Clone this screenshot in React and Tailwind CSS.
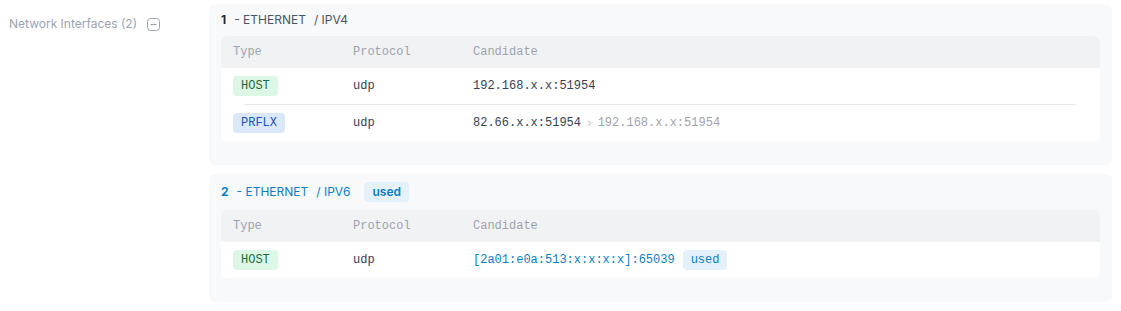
import React from 'react';

const mono = "font-['Liberation_Mono','DejaVu_Sans_Mono',monospace]";

const TypeBadge = ({ type }) => {
    const tone = type === 'HOST'
        ? 'bg-[#dcf7e6] text-[#1c6b3c]'
        : 'bg-[#dbe8fb] text-[#2050b8]';
    return (
        <span className={`flex items-center h-5 px-2 rounded text-[12px] leading-none ${mono} ${tone}`}>
            {type}
        </span>
    );
};

const UsedBadge = ({ monoFont }) => (
    <span
        className={`flex items-center h-5 px-2 rounded bg-[#e4f0fa] text-[#0b7ec3] text-[12px] leading-none ${monoFont ? mono : 'font-semibold'}`}
    >
        used
    </span>
);

const Row = ({ type, candidate }) => (
    <div className="grid grid-cols-[120px_120px_1fr] items-center h-9 pl-3 bg-white">
        <div className="flex"><TypeBadge type={type} /></div>
        <div className={`text-[12px] text-[#374151] ${mono}`}>udp</div>
        <div className={`flex items-center text-[12px] ${mono}`}>{candidate}</div>
    </div>
);

const CandidateTable = ({ children }) => (
    <div className="rounded-md overflow-hidden bg-white">
        <div className={`grid grid-cols-[120px_120px_1fr] items-center h-8 pl-3 bg-[#f1f2f4] text-[12px] text-[#9ca3af] ${mono}`}>
            <div>Type</div>
            <div>Protocol</div>
            <div>Candidate</div>
        </div>
        {children}
    </div>
);

export default function App() {
    return (
        <div className="flex w-[1121px] h-[311px] overflow-hidden bg-white font-['Inter','Liberation_Sans',sans-serif]">
            {/* left label */}
            <div className="w-[209px] shrink-0 pl-[9px] pt-4">
                <div className="flex items-center h-4 gap-[10px] text-[12px] text-[#9ca3af]">
                    <span>Network Interfaces (2)</span>
                    <svg width="13" height="13" viewBox="0 0 13 13" className="mt-[1px]">
                        <rect x="0.5" y="0.5" width="12" height="12" rx="3" fill="none" stroke="#9ca3af" strokeWidth="1" />
                        <line x1="3.5" y1="6.5" x2="9.5" y2="6.5" stroke="#9ca3af" strokeWidth="1.2" />
                    </svg>
                </div>
            </div>

            {/* interfaces */}
            <div className="flex-1 pr-[9px] pt-1 flex flex-col">
                <div className="rounded-md bg-[#f8f9fa] px-3 pt-2 pb-6">
                    <div className="flex items-center h-4 mb-2 text-[12px] text-[#4b5563]">
                        <span className="font-bold text-[#1f2937] mr-2">1</span>
                        <span className="mr-2">- ETHERNET</span>
                        <span>/ IPV4</span>
                    </div>
                    <CandidateTable>
                        <Row
                            type="HOST"
                            candidate={<span className="text-[#374151]">192.168.x.x:51954</span>}
                        />
                        <div className="h-px bg-[#e5e7eb] mx-6" />
                        <Row
                            type="PRFLX"
                            candidate={
                                <>
                                    <span className="text-[#374151]">82.66.x.x:51954</span>
                                    <span className="mx-[6px] text-[#c4c8ce] font-['Inter',sans-serif]">›</span>
                                    <span className="text-[#9ca3af]">192.168.x.x:51954</span>
                                </>
                            }
                        />
                    </CandidateTable>
                </div>

                <div className="rounded-md bg-[#f8f9fa] px-3 pt-2 pb-6 mt-[9px]">
                    <div className="flex items-center h-5 mb-2 text-[12px] text-[#0b7ec3]">
                        <span className="font-bold mr-2">2</span>
                        <span className="mr-2">- ETHERNET</span>
                        <span className="mr-[14px]">/ IPV6</span>
                        <UsedBadge />
                    </div>
                    <CandidateTable>
                        <Row
                            type="HOST"
                            candidate={
                                <>
                                    <span className="text-[#0b7ec3]">[2a01:e0a:513:x:x:x:x]:65039</span>
                                    <span className="ml-2"><UsedBadge monoFont /></span>
                                </>
                            }
                        />
                    </CandidateTable>
                </div>

                <div className="rounded-md bg-[#f8f9fa] h-10 mt-2" />
            </div>
        </div>
    );
}
